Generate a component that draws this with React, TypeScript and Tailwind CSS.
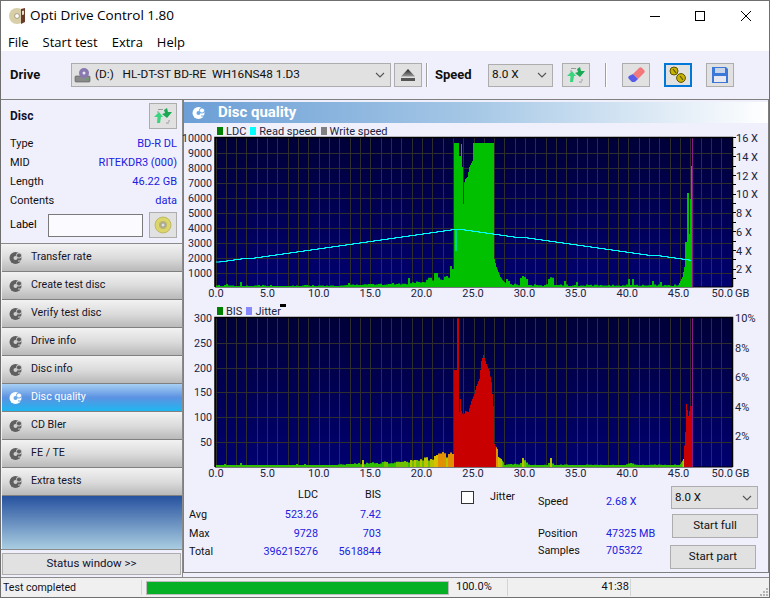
import React from "react";

const uiFont = "font-['Open_Sans',sans-serif]";
const labelFont = "font-['Roboto',sans-serif]";
const tickFont = "Roboto, sans-serif";
const tickColor = "#1c2440";

const rnd = (i: number) => {
  const v = Math.sin(i * 12.9898) * 43758.5453;
  return v - Math.floor(v);
};

// piecewise linear lookup, pts are [x, value]
function lerp(pts: number[][], x: number) {
  for (let i = 1; i < pts.length; i++) {
    if (x <= pts[i][0]) {
      const [x0, y0] = pts[i - 1];
      const [x1, y1] = pts[i];
      return y0 + ((y1 - y0) * (x - x0)) / (x1 - x0);
    }
  }
  return pts[pts.length - 1][1];
}

const ldcHill = [
  [454, 144], [458, 144], [458.5, 157], [460, 157], [460.5, 168], [461, 145], [462, 168], [462.5, 205], [463, 205],
  [463.5, 185], [465, 180], [467, 178], [469, 168], [472, 162], [473, 144], [493, 144], [493.5, 258], [496, 268],
  [500, 278], [503, 282], [506, 285],
];
const ldcEnd = [
  [678, 286], [682, 278], [684, 268], [685, 243], [686, 243], [686.5, 194], [688, 194], [688.5, 235], [689, 235],
  [689.5, 200], [690, 200], [690.5, 167], [692, 167],
];
const ldcSpikes: Record<number, number> = {
  218: 2, 224: 2, 226: 3, 240: 5, 241: 5, 250: 1, 258: 2, 262: 2, 270: 2, 288: 1, 304: 2, 305: 4, 306: 2, 313: 2,
  348: 4, 349: 4, 370: 3, 392: 4, 408: 9, 409: 7, 435: 14, 436: 14, 451: 21, 452: 18, 453: 16, 507: 8, 508: 6,
  520: 9, 523: 11, 524: 10, 527: 8, 565: 6, 577: 5, 628: 8, 633: 8, 652: 6, 660: 5,
};

function ldcHeight(px: number) {
  const x = px - (px % 2);
  if (x < 338) return ldcSpikes[x] ?? ldcSpikes[x + 1] ?? (rnd(x) > 0.7 ? 1.4 : 1);
  if (x < 454) {
    const base = lerp([[338, 1], [346, 2], [400, 3], [420, 5], [430, 8], [454, 10]], x);
    return ldcSpikes[x] ?? ldcSpikes[x + 1] ?? base * (0.75 + rnd(x) * 0.5);
  }
  if (px >= 692) return 0;
  if (px >= 678) return 288 - lerp(ldcEnd, px);
  if (px < 506) return 288 - lerp(ldcHill, px);
  const hump = lerp([[506, 2], [518, 3], [524, 8], [530, 3], [544, 2], [547, 5], [550, 11], [553, 6], [556, 2], [678, 2]], x);
  return ldcSpikes[x] ?? ldcSpikes[x + 1] ?? Math.max(1, hump * (0.4 + rnd(x) * 0.9));
}

const bisHill = [
  [454, 371], [456, 371], [456.5, 318], [458.5, 318], [459, 413], [460, 400], [461, 412], [463, 417], [465, 412],
  [468, 413], [471, 402], [474, 395], [476, 387], [479, 380], [481, 362], [483, 356], [486, 365], [489, 372],
  [491, 383], [493, 407], [494, 445], [497, 450], [498, 458], [501, 460], [504, 465],
];
const bisEnd = [
  [680, 465], [683, 460], [685, 433], [686, 405], [688, 417], [690, 407], [692, 407],
];

function bisHeight(px: number) {
  const x = px - (px % 2);
  if (px >= 692) return 1;
  if (px >= 680) return 468 - lerp(bisEnd, px);
  if (px >= 454 && px < 504) return 468 - lerp(bisHill, px);
  if (x < 338) return ({ 224: 3, 240: 4, 305: 3, 304: 3, 296: 3 } as Record<number, number>)[x] ?? 2;
  if (x < 454) {
    const base = lerp([[338, 2], [350, 3], [400, 4.5], [420, 6.5], [435, 10], [454, 13]], x);
    if (x === 362) return 7;
    return base * (0.75 + rnd(x + 3) * 0.6);
  }
  const hump = lerp([[504, 2], [518, 3], [524, 6], [530, 2], [546, 2], [550, 5], [553, 2], [625, 2], [630, 3.5], [635, 2], [680, 2]], x);
  if (x === 522) return 9;
  if (x === 550) return 9;
  return Math.max(2, hump * (0.75 + rnd(x) * 0.5));
}

function bisColor(h: number) {
  if (h < 5) return "#30c000";
  if (h < 7) return "#70c000";
  if (h < 10) return "#b8c400";
  if (h < 13) return "#d8c000";
  if (h < 20) return "#e09000";
  return "#c80000";
}

const columns = Array.from({ length: 692 - 216 }, (_, i) => 216 + i);

function readSpeedPath() {
  let d = "M216 263";
  for (let x = 220; x < 691; x += 7) {
    const y = x < 455 ? 263 - ((x - 216) / (455 - 216)) * 33.5 : 229.5 + ((x - 455) / (691 - 455)) * 32;
    d += ` H${x} V${Math.round(y) + 0.5}`;
  }
  return d + " H691";
}

function Plot({ top, id, hLines, children }: { top: number; id: string; hLines: number[]; children: React.ReactNode }) {
  return (
    <>
      <defs>
        <linearGradient id={id} x1="0" y1="0" x2="0" y2="1">
          <stop offset="0" stopColor="#000038" />
          <stop offset="1" stopColor="#000070" />
        </linearGradient>
      </defs>
      <rect x={215} y={top} width={517} height={150} fill={`url(#${id})`} />
      {Array.from({ length: 51 }, (_, i) => {
        const x = Math.floor(216 + i * 10.32) + 0.5;
        return <line key={i} x1={x} x2={x} y1={top} y2={top + 150} stroke="#2e2e2e" strokeWidth={1} />;
      })}
      {hLines.map((y) => (
        <line key={y} x1={215} x2={732} y1={y} y2={y} stroke="#2e2e2e" strokeWidth={1} />
      ))}
      <line x1={215} x2={732.5} y1={top + 150} y2={top + 150} stroke="#000" strokeWidth={1} />
      {children}
      <line x1={692.5} x2={692.5} y1={top} y2={top + 150} stroke="#8a1a8a" strokeWidth={1} />
      <path d={`M215 ${top + 150} V${top + 0.5} H732.5 V${top + 150}`} fill="none" stroke="#000" strokeWidth={1.5} />
      {Array.from({ length: 11 }, (_, i) => (
        <text
          key={i}
          x={i === 10 ? 733 : 216 + i * 51.4}
          y={top + 160}
          textAnchor={i === 10 ? "end" : "middle"}
          fontSize={11}
          fill={tickColor}
          fontFamily={tickFont}
        >
          {(i * 5).toFixed(1)}
        </text>
      ))}
      <text x={735} y={top + 160} fontSize={11} fill={tickColor} fontFamily={tickFont}>
        GB
      </text>
    </>
  );
}

function LdcChart() {
  const d = columns.map((x) => `M${x} 288V${(288 - ldcHeight(x)).toFixed(1)}h1V288z`).join("");
  return (
    <svg viewBox="184 136 584 166" className="block h-[166px] w-[584px] overflow-visible">
      <Plot top={138} id="ldc" hLines={Array.from({ length: 9 }, (_, i) => Math.round(154 + i * 14.97) + 0.5)}>
        <path d={d} fill="#00c000" />
        <path d={readSpeedPath()} fill="none" stroke="#00ffff" strokeWidth={1.1} />
        <path d="M456 230V252" stroke="#00e8e8" strokeWidth={1.2} />
      </Plot>
      {Array.from({ length: 10 }, (_, i) => (
        <text key={i} x={212} y={143 + i * 15} textAnchor="end" fontSize={10.7} fill={tickColor} fontFamily={tickFont}>
          {10000 - i * 1000}
        </text>
      ))}
      {Array.from({ length: 16 }, (_, i) => {
        const y = Math.round(279 - i * 9.37) + 0.5;
        return <line key={i} x1={732} x2={736} y1={y} y2={y} stroke="#000" strokeWidth={1} />;
      })}
      {[2, 4, 6, 8, 10, 12, 14, 16].map((v) => (
        <text key={v} x={736} y={293 - v * 9.37} fontSize={11} fill={tickColor} fontFamily={tickFont}>
          {v} X
        </text>
      ))}
    </svg>
  );
}

function BisChart() {
  const groups: Record<string, string> = {};
  columns.forEach((x) => {
    const h = bisHeight(x);
    const c = bisColor(h);
    groups[c] = (groups[c] ?? "") + `M${x} 468V${(468 - h).toFixed(1)}h1V468z`;
  });
  return (
    <svg viewBox="184 316 584 166" className="block h-[166px] w-[584px] overflow-visible">
      <Plot top={318} id="bis" hLines={[344.5, 369.5, 393.5, 418.5, 443.5]}>
        {Object.entries(groups).map(([c, d]) => (
          <path key={c} d={d} fill={c} />
        ))}
      </Plot>
      {[300, 250, 200, 150, 100, 50].map((v, i) => (
        <text key={v} x={212} y={323 + i * 24.8} textAnchor="end" fontSize={10.7} fill={tickColor} fontFamily={tickFont}>
          {v}
        </text>
      ))}
      {[10, 8, 6, 4, 2].map((v, i) => (
        <text key={v} x={735} y={323 + i * 29.5} fontSize={11} fill={tickColor} fontFamily={tickFont}>
          {v}%
        </text>
      ))}
    </svg>
  );
}

function NavDisc({ active }: { active?: boolean }) {
  const c = active ? "#ffffff" : "#5f5f5f";
  const hole = active ? "#6aa8e8" : "#d0d0d0";
  return (
    <svg width="14" height="14" viewBox="0 0 14 14">
      <circle cx="6.5" cy="7" r="6" fill={c} />
      <circle cx="6.5" cy="7" r="2" fill={hole} />
      <circle cx="10" cy="4.5" r="2.6" fill={c} stroke={hole} strokeWidth="1" />
      <path d="M9 10l3 0" stroke={hole} strokeWidth="1" />
    </svg>
  );
}

function RefreshIcon() {
  return (
    <svg width="20" height="18" viewBox="0 0 20 18">
      <path d="M5 2.5h5M4 5h2M15 14h2M13 16h3" stroke="#9a9a9a" strokeWidth="1" />
      <path d="M1 10l5-5 4 5H8l-1 6H4l.5-6z" fill="#38d47e" />
      <path d="M11 3l3-2 1 4h4l-5 6-5-4 3-1z" fill="#1aa855" />
    </svg>
  );
}

function ToolButton({ children, selected, className = "" }: { children: React.ReactNode; selected?: boolean; className?: string }) {
  return (
    <button
      className={`flex h-[24px] w-[28px] items-center justify-center bg-[#e1e1e1] ${
        selected ? "border-2 border-[#0078d7]" : "border border-[#adadad]"
      } ${className}`}
    >
      {children}
    </button>
  );
}

function Chevron() {
  return (
    <svg width="10" height="6" viewBox="0 0 10 6" className="shrink-0">
      <path d="M1 1l4 4 4-4" fill="none" stroke="#555" strokeWidth="1.1" />
    </svg>
  );
}

const navItems = [
  "Transfer rate",
  "Create test disc",
  "Verify test disc",
  "Drive info",
  "Disc info",
  "Disc quality",
  "CD Bler",
  "FE / TE",
  "Extra tests",
];

function Row({ label, value }: { label: string; value: string }) {
  return (
    <div className="flex h-[19px] items-center justify-between">
      <span className="text-[#101010]">{label}</span>
      <span className="text-[#2020e0]">{value}</span>
    </div>
  );
}

function Sidebar() {
  return (
    <aside className={`flex w-[182px] shrink-0 flex-col border-r border-[#8a8a8a] ${labelFont} text-[11px]`}>
      <div className="flex h-[30px] items-center justify-between pl-[9px] pr-[5px] pt-[2px]">
        <span className="text-[12px] font-bold text-[#101030]">Disc</span>
        <button className="flex h-[26px] w-[28px] items-center justify-center border border-[#adadad] bg-[#e1e1e1]">
          <RefreshIcon />
        </button>
      </div>
      <div className="mt-[5px] pl-[9px] pr-[5px]">
        <Row label="Type" value="BD-R DL" />
        <Row label="MID" value="RITEKDR3 (000)" />
        <Row label="Length" value="46.22 GB" />
        <Row label="Contents" value="data" />
        <div className="mt-[1px] flex items-center">
          <span className="w-[38px]">Label</span>
          <div className="h-[23px] w-[95px] border border-[#7a7a7a] bg-[#fafaff]" />
          <button className="ml-[6px] flex h-[26px] w-[28px] items-center justify-center border border-[#adadad] bg-[#e1e1e1]">
            <svg width="18" height="18" viewBox="0 0 18 18">
              <circle cx="9" cy="9" r="8" fill="#dcd66a" stroke="#a8a24a" strokeWidth="0.6" />
              <circle cx="9" cy="9" r="4" fill="#b8b47a" />
              <circle cx="9" cy="9" r="2" fill="#e1e1e1" stroke="#888" strokeWidth="0.6" />
            </svg>
          </button>
        </div>
      </div>
      <nav className="mt-[5px] flex flex-col border-t border-[#8a8a8a] pl-[1px] text-[10.7px]">
        {navItems.map((item) => {
          const active = item === "Disc quality";
          return (
            <div
              key={item}
              className={`flex h-[28px] items-center border-b border-[#808080] pl-[7px] ${
                active
                  ? "bg-[linear-gradient(#a8d0f4,#5c92e2_50%,#1fb6f0)] text-white"
                  : "bg-[linear-gradient(#f2f2f2,#dcdcdc_50%,#b9b9b9)] text-[#141428]"
              }`}
            >
              <NavDisc active={active} />
              <span className="ml-[8px]">{item}</span>
            </div>
          );
        })}
      </nav>
      <div className="ml-[1px] flex-1 bg-[linear-gradient(#27529f,#a9cde1)]" />
      <div className="border-t border-[#8a8a8a] pb-[2px] pl-[1px] pr-[1px] pt-[3px]">
        <button className="h-[22px] w-full border border-[#adadad] bg-[#e1e1e1] text-center text-[11.5px] text-[#101030]">Status window &gt;&gt;</button>
      </div>
    </aside>
  );
}

function Legend({ items, className = "" }: { items: [string, string][]; className?: string }) {
  return (
    <div className={`flex items-center pl-[33px] text-[11px] leading-none text-[#1c2440] ${labelFont} ${className}`}>
      {items.map(([label, color]) => (
        <span key={label} className="mr-[4px] flex items-center">
          <span className="mr-[3px] h-[8px] w-[6px]" style={{ backgroundColor: color }} />
          {label}
        </span>
      ))}
    </div>
  );
}

function Stats() {
  return (
    <div className={`flex flex-1 text-[10.8px] ${labelFont}`}>
      <div className="grid h-fit w-[197px] grid-cols-[52px_77px_63px] grid-rows-[19px_20px_18px_18px] items-center pl-[5px] pt-[5px] text-[#101010]">
        <span />
        <span className="text-right">LDC</span>
        <span className="text-right">BIS</span>
        <span>Avg</span>
        <span className="text-right text-[#2020e0]">523.26</span>
        <span className="text-right text-[#2020e0]">7.42</span>
        <span>Max</span>
        <span className="text-right text-[#2020e0]">9728</span>
        <span className="text-right text-[#2020e0]">703</span>
        <span>Total</span>
        <span className="text-right text-[#2020e0]">396215276</span>
        <span className="text-right text-[#2020e0]">5618844</span>
      </div>
      <div className="ml-[80px] mt-[10px] flex h-[13px] w-[77px] items-center">
        <span className="h-[13px] w-[13px] border border-[#333] bg-white" />
        <span className="ml-[16px] text-[#101010]">Jitter</span>
      </div>
      <div className="grid h-fit grid-cols-[68px_64px] grid-rows-[19px_30px_19px] items-center pt-[12px] text-[#101010]">
        <span>Speed</span>
        <span className="text-[#2020e0]">2.68 X</span>
        <span className="self-end">Position</span>
        <span className="self-end text-[#2020e0]">47325 MB</span>
        <span>Samples</span>
        <span className="text-[#2020e0]">705322</span>
      </div>
      <div className="flex w-[88px] flex-col pt-[5px] text-[11.5px] text-[#101010]">
        <div className="ml-[1px] flex h-[23px] w-[87px] items-center justify-between border border-[#adadad] bg-[#e1e1e1] pl-[3px] pr-[5px]">
          8.0 X <Chevron />
        </div>
        <button className="ml-[2px] mt-[5px] h-[24px] w-[86px] border border-[#adadad] bg-[#e1e1e1]">Start full</button>
        <button className="mt-[7px] h-[24px] w-[86px] border border-[#adadad] bg-[#e1e1e1]">Start part</button>
      </div>
    </div>
  );
}

function MainPanel() {
  return (
    <main className="mb-[4px] flex min-w-0 flex-1 flex-col border-x border-b border-[#7f7f7f]">
      <div className="mt-[2px] flex h-[21px] shrink-0 items-center bg-[linear-gradient(90deg,#6c9fd6,#a6c8e6_50%,#ffffff)] pl-[8px]">
        <NavDisc active />
        <span className={`ml-[12px] text-[15px] font-bold text-white ${labelFont}`}>Disc quality</span>
      </div>
      <Legend
        className="h-[12px] pt-[4px]"
        items={[
          ["LDC", "#008000"],
          ["Read speed", "#00ffff"],
          ["Write speed", "#808080"],
        ]}
      />
      <LdcChart />
      <div className="relative">
        <Legend
          className="h-[14px] pt-[6px]"
          items={[
            ["BIS", "#008000"],
            ["Jitter", "#8888ff"],
          ]}
        />
        <span className="absolute left-[96px] top-[3px] h-[3px] w-[6px] bg-black" />
      </div>
      <BisChart />
      <Stats />
    </main>
  );
}

function StatusBar() {
  return (
    <footer className={`flex h-[20px] shrink-0 items-center border-t border-[#8a8a8a] bg-[#f0f0f0] text-[11px] text-[#101020] ${labelFont}`}>
      <span className="w-[141px] border-r border-[#d4d4d4] pl-[2px] text-[10.6px]">Test completed</span>
      <div className="ml-[4px] h-[14px] w-[303px] border border-[#bcbcbc] bg-[#06b025]" />
      <span className="ml-[1px] w-[58px] border-r border-[#d4d4d4] pl-[6px]">100.0%</span>
      <span className="w-[123px] border-r border-[#d4d4d4] pr-[1px] text-right">41:38</span>
      <svg width="8" height="8" viewBox="0 0 8 8" className="ml-auto mr-[1px] mt-[8px]">
        <path d="M6 0h2v2H6zM3 3h2v2H3zM6 3h2v2H6zM0 6h2v2H0zM3 6h2v2H3zM6 6h2v2H6z" fill="#b4b4b4" />
      </svg>
    </footer>
  );
}

export default function App() {
  return (
    <div className="flex h-[598px] w-[770px] flex-col overflow-hidden border border-[#6f6f6f] bg-[#f0f0fc]">
      <header className={`flex h-[33px] shrink-0 items-center bg-white pb-[4px] ${uiFont}`}>
        <svg width="20" height="20" viewBox="0 0 20 20" className="ml-[7px]">
          <circle cx="9" cy="10" r="8" fill="#d8cfa8" />
          <circle cx="9" cy="10" r="2.4" fill="#fff" stroke="#8a8060" strokeWidth="0.7" />
          <path d="M13 3l4-1v14l-4 2z" fill="#6b3b2a" />
          <path d="M14 5l2-.5v4l-2 .5z" fill="#e8e0c8" />
        </svg>
        <span className="ml-[2px] text-[13.5px] text-black">Opti Drive Control 1.80</span>
        <div className="ml-auto flex h-full items-center">
          <svg width="12" height="12" viewBox="0 0 12 12" className="mr-[33px]">
            <path d="M1 6.5h10" stroke="#000" strokeWidth="1" />
          </svg>
          <svg width="12" height="12" viewBox="0 0 12 12" className="mr-[34px]">
            <rect x="1.5" y="1.5" width="9" height="9" fill="none" stroke="#000" strokeWidth="1" />
          </svg>
          <svg width="12" height="12" viewBox="0 0 12 12" className="mr-[17px]">
            <path d="M1 1l10 10M11 1L1 11" stroke="#000" strokeWidth="1" />
          </svg>
        </div>
      </header>
      <div className={`flex h-[17px] shrink-0 items-center gap-[14px] bg-white pl-[7px] text-[13px] text-black ${uiFont}`}>
        <span>File</span>
        <span>Start test</span>
        <span>Extra</span>
        <span>Help</span>
      </div>
      <div className={`flex h-[49px] shrink-0 items-center border-b border-[#808080] pl-[9px] ${labelFont} text-[11.8px] text-[#101010]`}>
        <span className="w-[61px] text-[13px] font-bold">Drive</span>
        <div className="flex h-[24px] w-[320px] items-center border border-[#adadad] bg-[#e1e1e1] pl-[2px] pr-[5px]">
          <svg width="18" height="16" viewBox="0 0 18 16">
            <rect x="1" y="9" width="15" height="6" rx="1" fill="#8a8a8a" stroke="#555" strokeWidth="0.6" />
            <circle cx="10" cy="6" r="5" fill="#8a78b0" />
            <circle cx="10" cy="6" r="1.5" fill="#e8e8f0" />
            <circle cx="13.5" cy="12.5" r="1" fill="#30c050" />
          </svg>
          <span className="ml-[3px] flex-1 whitespace-pre">(D:)   HL-DT-ST BD-RE  WH16NS48 1.D3</span>
          <Chevron />
        </div>
        <ToolButton className="ml-[3px]">
          <svg width="16" height="14" viewBox="0 0 16 14">
            <defs>
              <linearGradient id="ej" x1="0" y1="0" x2="0" y2="1">
                <stop offset="0" stopColor="#222" />
                <stop offset="1" stopColor="#999" />
              </linearGradient>
            </defs>
            <path d="M8 1l7 7.5H1z" fill="url(#ej)" />
            <rect x="1" y="10" width="14" height="3" fill="#555" />
          </svg>
        </ToolButton>
        <span className="ml-[4px] h-[24px] w-[2px] border-l border-[#a0a0a0] bg-white" />
        <span className="ml-[7px] w-[53px] text-[13px] font-bold">Speed</span>
        <div className="flex h-[23px] w-[65px] items-center justify-between border border-[#adadad] bg-[#e1e1e1] pl-[3px] pr-[5px]">
          8.0 X <Chevron />
        </div>
        <ToolButton className="ml-[9px]">
          <RefreshIcon />
        </ToolButton>
        <span className="ml-[15px] h-[24px] w-[2px] border-l border-[#a0a0a0] bg-white" />
        <ToolButton className="ml-[15px]">
          <svg width="20" height="18" viewBox="0 0 20 18">
            <path d="M7 8l6-6c1-1 2-1 3 0l2 2c1 1 1 2 0 3l-6 6z" fill="#f2787c" />
            <path d="M7 8l5 5-2 2c-1 1-2 1-3 1H6l-3-3c-1-1-1-2 0-3z" fill="#5a5ae8" />
          </svg>
        </ToolButton>
        <ToolButton selected className="ml-[14px]">
          <svg width="20" height="18" viewBox="0 0 20 18">
            <circle cx="6" cy="5" r="4" fill="#c8b400" stroke="#5c5200" strokeWidth="1" />
            <circle cx="13" cy="12" r="4.4" fill="#c8b400" stroke="#5c5200" strokeWidth="1" />
            <path d="M5 3l3 4M12 10l3 4" stroke="#5c5200" strokeWidth="1.2" />
          </svg>
        </ToolButton>
        <ToolButton className="ml-[14px]">
          <svg width="18" height="18" viewBox="0 0 18 18">
            <path d="M1 1h14l2 2v14H1z" fill="#3c78d8" />
            <rect x="4" y="2" width="10" height="5" fill="#c8d4e8" />
            <rect x="3" y="10" width="12" height="6" fill="#e8e8f0" />
          </svg>
        </ToolButton>
      </div>
      <div className="flex min-h-0 flex-1">
        <Sidebar />
        <MainPanel />
      </div>
      <StatusBar />
    </div>
  );
}
